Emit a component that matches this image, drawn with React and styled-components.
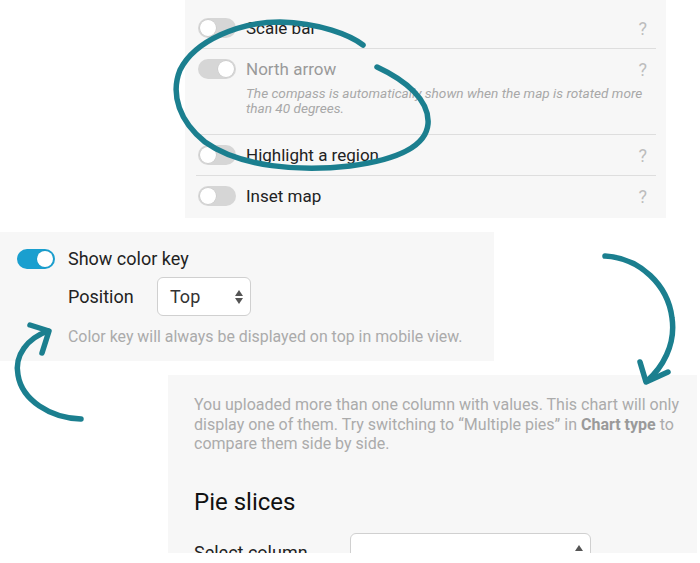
import React from 'react'
import styled, {createGlobalStyle} from 'styled-components'

const GlobalStyle = createGlobalStyle`
  html, body {
    margin: 0;
    padding: 0;
    background: #fff;
  }
  body {
    font-family: Roboto, "Liberation Sans", sans-serif;
    color: #222;
  }
`

const Page = styled.div`
  position: relative;
  width: 700px;
  height: 563px;
  overflow: hidden;
  background: #fff;
`

const Panel = styled.div`
  box-sizing: border-box;
  margin-left: ${p => p.$left || 0}px;
  margin-top: ${p => p.$top || 0}px;
  width: ${p => p.$width}px;
  height: ${p => p.$height}px;
  background: #f7f7f7;
  overflow: hidden;
`

const LayerList = styled.div`
  display: flex;
  flex-direction: column;
  padding: 8px 10px 0 11px;
`

const Row = styled.div`
  display: flex;
  flex-direction: column;
  border-bottom: ${p => (p.$last ? 'none' : '1px solid #dedede')};
  padding-bottom: ${p => (p.$hasNote ? 18 : 0)}px;
`

const Line = styled.div`
  display: flex;
  align-items: center;
  height: 40px;
`

const Track = styled.span`
  position: relative;
  display: inline-block;
  flex: none;
  width: 38px;
  height: 20px;
  border-radius: 10px;
  margin-left: ${p => p.$offset || 0}px;
  background: ${p => (p.$on && !p.$disabled ? '#1a9fcf' : '#d6d6d6')};
`

const Knob = styled.span`
  position: absolute;
  top: 2px;
  left: ${p => (p.$on ? 20 : 2)}px;
  width: 16px;
  height: 16px;
  border-radius: 50%;
  background: #fff;
  box-shadow: 0 0 0 0.5px rgba(0, 0, 0, 0.08);
`

const Toggle = ({on, disabled, offset}) => (
  <Track $on={on} $disabled={disabled} $offset={offset}>
    <Knob $on={on}/>
  </Track>
)

const Label = styled.span`
  flex: 1;
  margin-left: ${p => p.$gap || 10}px;
  font-size: ${p => p.$size || 17}px;
  color: ${p => (p.$muted ? '#9a9a9a' : '#222')};
`

const Help = styled.span`
  font-size: 18px;
  color: #bdbdbd;
  margin-right: 9px;
`

const Note = styled.div`
  margin: -3px 0 0 50px;
  font-size: 13.6px;
  font-style: italic;
  line-height: 15px;
  color: #a8a8a8;
`

const KeyBox = styled.div`
  display: flex;
  flex-direction: column;
  padding: 16px 0 0 17px;
`

const KeyLine = styled.div`
  display: flex;
  align-items: center;
  height: 21px;
`

const Field = styled.div`
  display: flex;
  align-items: center;
  margin: ${p => p.$margin || '0'};
`

const FieldLabel = styled.span`
  font-size: 18px;
  color: #222;
  width: ${p => p.$width}px;
`

const Select = styled.div`
  box-sizing: border-box;
  display: flex;
  align-items: center;
  justify-content: space-between;
  width: ${p => p.$width}px;
  height: 39px;
  padding: 0 7px 0 12px;
  background: #fff;
  border: 1px solid #d0d0d0;
  border-radius: 6px;
  font-size: 18px;
  color: #333;
`

const Arrows = styled.span`
  display: flex;
  flex-direction: column;
  gap: 2px;
  &::before, &::after {
    content: '';
    width: 0;
    height: 0;
    border-left: 4px solid transparent;
    border-right: 4px solid transparent;
  }
  &::before {
    border-bottom: 6px solid #555;
  }
  &::after {
    border-top: 6px solid #555;
  }
`

const Hint = styled.div`
  margin: 12px 0 0 51px;
  font-size: 15.9px;
  line-height: 18px;
  color: #ababab;
`

const PieBox = styled.div`
  padding: 20px 10px 0 26px;
`

const Paragraph = styled.p`
  margin: 0;
  font-size: 16px;
  line-height: 19.5px;
  color: #ababab;
  b {
    color: #9a9a9a;
    font-weight: 700;
  }
`

const Heading = styled.h3`
  margin: 35px 0 0;
  font-size: 24px;
  line-height: 26px;
  font-weight: 400;
  color: #111;
`

const Scribbles = styled.svg`
  position: absolute;
  left: 0;
  top: 0;
  pointer-events: none;
`

const layers = [
  {name: 'Scale bar'},
  {name: 'North arrow', on: true, disabled: true, note: 'The compass is automatically shown when the map is rotated more than 40 degrees.'},
  {name: 'Highlight a region'},
  {name: 'Inset map'}
]

const App = () => (
  <Page>
    <GlobalStyle/>
    <Panel $left={185} $width={481} $height={218}>
      <LayerList>
        {layers.map((l, i) => (
          <Row key={l.name} $last={i === layers.length - 1} $hasNote={!!l.note}>
            <Line>
              <Toggle on={l.on} disabled={l.disabled} offset={2}/>
              <Label $muted={l.disabled}>{l.name}</Label>
              <Help>?</Help>
            </Line>
            {l.note && <Note>{l.note}</Note>}
          </Row>
        ))}
      </LayerList>
    </Panel>

    <Panel $top={14} $width={494} $height={129}>
      <KeyBox>
        <KeyLine>
          <Toggle on/>
          <Label $gap={13} $size={18}>Show color key</Label>
        </KeyLine>
        <Field $margin="8px 0 0 51px">
          <FieldLabel $width={89}>Position</FieldLabel>
          <Select $width={94}>
            Top
            <Arrows/>
          </Select>
        </Field>
        <Hint>Color key will always be displayed on top in mobile view.</Hint>
      </KeyBox>
    </Panel>

    <Panel $left={168} $top={14} $width={529} $height={178}>
      <PieBox>
        <Paragraph>
          You uploaded more than one column with values. This chart will only display one of them. Try switching to “Multiple pies” in <b>Chart type</b> to compare them side by side.
        </Paragraph>
        <Heading>Pie slices</Heading>
        <Field $margin="18px 0 0">
          <FieldLabel $width={156}>Select column</FieldLabel>
          <Select $width={241}>
            <span/>
            <Arrows/>
          </Select>
        </Field>
      </PieBox>
    </Panel>

    <Scribbles width="700" height="563" viewBox="0 0 700 563">
      <g fill="none" stroke="#1b7f8f" strokeWidth="5.5" strokeLinecap="round" strokeLinejoin="round">
        <path d="M377 67 C 405 80, 430 100, 428 124 C 426 147, 395 160, 350 166 C 300 172, 240 167, 205 142 C 180 122, 170 95, 180 70 C 195 40, 240 22, 280 22 C 320 23, 350 35, 363 45"/>
        <path d="M605 256 C 640 258, 668 285, 672 318 C 676 345, 662 368, 647 381"/>
        <path d="M640 362 L 646 382 L 668 372"/>
        <path d="M81 419 C 50 418, 22 400, 18 375 C 14 355, 28 338, 48 331"/>
        <path d="M30 325 L 49 331 L 42 353"/>
      </g>
    </Scribbles>
  </Page>
)

export default App
